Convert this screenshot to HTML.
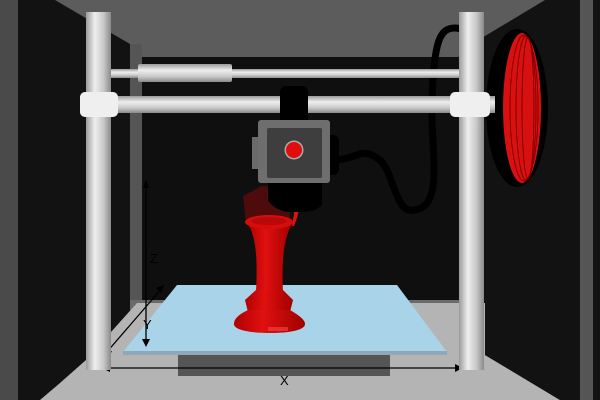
<!DOCTYPE html>
<html><head><meta charset="utf-8"><style>
html,body{margin:0;padding:0;background:#000;width:600px;height:400px;overflow:hidden}
svg{display:block}
text{font-family:"Liberation Sans",sans-serif;font-size:13px;fill:#000}
</style></head><body>
<svg width="600" height="400" viewBox="0 0 600 400" xmlns="http://www.w3.org/2000/svg">
<defs>
<linearGradient id="pv" x1="0" x2="1" y1="0" y2="0">
<stop offset="0" stop-color="#9a9a9a"/><stop offset="0.35" stop-color="#eeeeee"/><stop offset="0.7" stop-color="#c8c8c8"/><stop offset="1" stop-color="#8a8a8a"/></linearGradient>
<linearGradient id="ph" x1="0" x2="0" y1="0" y2="1">
<stop offset="0" stop-color="#9a9a9a"/><stop offset="0.35" stop-color="#eeeeee"/><stop offset="0.7" stop-color="#c8c8c8"/><stop offset="1" stop-color="#8a8a8a"/></linearGradient>
<linearGradient id="rv" x1="0" x2="1" y1="0" y2="0">
<stop offset="0" stop-color="#b00000"/><stop offset="0.4" stop-color="#e01010"/><stop offset="1" stop-color="#a00000"/></linearGradient>
</defs>
<rect width="600" height="400" fill="#121212"/>
<rect x="0" y="0" width="18" height="400" fill="#4a4a4a"/>
<rect x="580" y="0" width="13" height="400" fill="#555"/>
<polygon points="55,0 545,0 485,36 458,57 142,57 130,44" fill="#5c5c5c"/>
<rect x="142" y="57" width="316" height="243" fill="#0f0f0f"/>
<rect x="130" y="44" width="12" height="266" fill="#555"/>
<rect x="130" y="300" width="330" height="10" fill="#6a6a6a"/>
<polygon points="137,303 485,303 485,355 560,400 40,400 60,383 86,360" fill="#b4b4b4"/>
<polygon points="485,36 580,0 580,400 560,400 485,355" fill="#121212"/>
<rect x="178" y="352" width="212" height="24" fill="#555"/>
<polygon points="177,285 397,285 447,352 123,352" fill="#a9d3e9"/>
<rect x="123" y="351" width="324" height="4" fill="#8fa8b5"/>
<!-- vase ghost -->
<path d="M243,196 L262,186 L288,188 L290,220 L246,222 Z" fill="#6a0a0a" opacity="0.7"/>
<path d="M248,224 C258,240 257,270 256,292 L283,292 C282,270 282,240 292,224 Z" fill="url(#rv)"/>
<ellipse cx="269" cy="222" rx="24" ry="7" fill="#d80c0c"/>
<ellipse cx="269" cy="221" rx="18" ry="4" fill="#b80808"/>
<path d="M256,290 L283,290 L293,300 L290,312 L248,312 L245,300 Z" fill="url(#rv)"/>
<path d="M248,310 L290,310 C300,316 305,320 305,324 C305,330 290,333 270,333 C250,333 234,330 234,324 C234,318 240,314 248,310 Z" fill="url(#rv)"/>
<rect x="268" y="327" width="20" height="4" fill="#f04040" opacity="0.7"/>
<path d="M293,200 L300,205 L297,218 L294,226 L292,226 L294,214 Z" fill="#e01010"/>
<g stroke="#000" stroke-width="1.3" fill="none">
<line x1="146" y1="182" x2="146" y2="345"/>
<line x1="163" y1="287" x2="106" y2="353"/>
<line x1="104" y1="368" x2="461" y2="368"/>
</g>
<g fill="#000">
<polygon points="146,180 143,188 149,188"/>
<polygon points="146,347 142,339 150,339"/>
<polygon points="164,285 156,288 161,293"/>
<polygon points="104,356 108,347 112,352"/>
<polygon points="102,368 110,364 110,372"/>
<polygon points="463,368 455,364 455,372"/>
</g>
<text x="150" y="263">Z</text>
<text x="143" y="329">Y</text>
<text x="280" y="385">X</text>
<path d="M330,160 C360,160 360,145 380,160 C395,175 395,215 415,210 C445,205 430,150 432,100 C434,40 440,28 455,28 C472,28 468,50 470,60 C472,80 475,90 482,92" stroke="#000" stroke-width="7" fill="none"/>
<!-- spool -->
<ellipse cx="517" cy="108" rx="31" ry="79" fill="#000"/>
<ellipse cx="522" cy="108" rx="19" ry="75" fill="#d81010"/>
<g stroke="#7a0000" stroke-width="0.9" fill="none">
<ellipse cx="524" cy="108" rx="14" ry="73"/>
<ellipse cx="526" cy="108" rx="10" ry="72"/>
<ellipse cx="528" cy="108" rx="6" ry="71"/>
</g>
<path d="M503,108 C503,60 508,38 513,34 C500,45 495,75 495,108 C495,140 500,170 513,182 C508,178 503,155 503,108 Z" fill="#000"/>
<rect x="86" y="12" width="25" height="358" fill="url(#pv)"/>
<rect x="459" y="12" width="25" height="358" fill="url(#pv)"/>
<rect x="111" y="69" width="348" height="9" fill="url(#ph)"/>
<rect x="138" y="64" width="94" height="18" rx="2" fill="url(#ph)"/>
<rect x="80" y="96" width="415" height="17" fill="url(#ph)"/>
<rect x="80" y="92" width="38" height="25" rx="5" fill="#efefef"/>
<rect x="450" y="92" width="40" height="25" rx="5" fill="#efefef"/>
<rect x="280" y="86" width="28" height="40" rx="6" fill="#000"/>
<path d="M268,180 L322,180 L322,205 C315,212 305,212 300,212 L290,212 C280,212 270,205 268,200 Z" fill="#000"/>
<rect x="325" y="135" width="14" height="40" rx="6" fill="#000"/>
<rect x="252" y="137" width="8" height="32" fill="#6a6a6a"/>
<rect x="258" y="120" width="72" height="63" rx="3" fill="#6e6e6e"/>
<rect x="267" y="128" width="55" height="50" rx="2" fill="#3e3e3e"/>
<circle cx="294" cy="150" r="9.5" fill="#aaa"/>
<circle cx="294" cy="150" r="8" fill="#e00d0d"/>
</svg>
</body></html>
